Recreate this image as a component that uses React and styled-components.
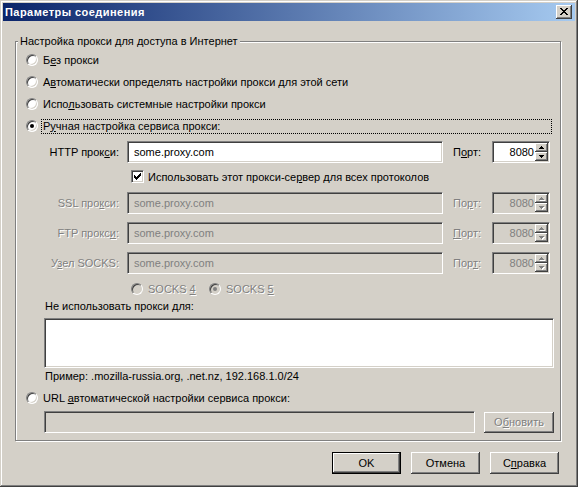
import React from 'react'
import styled, { createGlobalStyle } from 'styled-components'

const GlobalStyle = createGlobalStyle`
  html, body {
    margin: 0;
    padding: 0;
    background: #d4d0c8;
  }
  body {
    font-family: "Liberation Sans", Arial, sans-serif;
    font-size: 11px;
    color: #000;
  }
`

const raised = `inset -1px -1px 0 #404040, inset 1px 1px 0 #fff, inset -2px -2px 0 #808080, inset 2px 2px 0 #d4d0c8`
const sunken = `inset 1px 1px 0 #404040, inset -1px -1px 0 #d4d0c8`

const Window = styled.div`
  box-sizing: border-box;
  width: 578px;
  height: 487px;
  padding: 3px;
  background: #d4d0c8;
  box-shadow: inset -1px -1px 0 #404040, inset 1px 1px 0 #d4d0c8,
    inset -2px -2px 0 #808080, inset 2px 2px 0 #fff;
  display: flex;
  flex-direction: column;
`

const TitleBar = styled.div`
  flex: none;
  height: 18px;
  display: flex;
  align-items: center;
  justify-content: space-between;
  padding: 0 3px 0 2px;
  background: linear-gradient(to right, #0a246a, #a6caf0);
  color: #fff;
  font-weight: bold;
  font-size: 11px;
  letter-spacing: 0.45px;
`

const CloseButton = styled.div`
  box-sizing: border-box;
  width: 16px;
  height: 14px;
  background: #d4d0c8;
  box-shadow: ${raised};
  display: flex;
  align-items: center;
  justify-content: center;
  padding-bottom: 1px;
`

const Client = styled.div`
  flex: 1;
  display: flex;
  flex-direction: column;
  padding: 14px 14px 0 12px;
`

const Group = styled.fieldset`
  margin: 0;
  padding: 1px 0 7px;
  min-width: 0;
  border: 1px solid #808080;
  box-shadow: inset 1px 1px 0 #fff, 1px 1px 0 #fff;
`

const Legend = styled.legend`
  margin-left: 2px;
  padding: 0 2px;
  line-height: 13px;
  background: #d4d0c8;
`

const Key = styled.span`
  text-decoration: underline;
`

const OptionRow = styled.div`
  display: flex;
  align-items: center;
  height: ${p => p.$h || 22}px;
  margin-top: ${p => p.$mt || 0}px;
  padding-left: ${p => p.$indent}px;
  padding-right: 8px;
`

const Radio = styled.span`
  flex: none;
  box-sizing: border-box;
  width: 12px;
  height: 12px;
  border-radius: 50%;
  background: ${p => (p.$off ? '#d4d0c8' : '#fff')};
  border: 1px solid;
  border-color: #808080 #fff #fff #808080;
  box-shadow: ${sunken};
  display: flex;
  align-items: center;
  justify-content: center;

  &::after {
    content: '';
    display: ${p => (p.$on ? 'block' : 'none')};
    width: 4px;
    height: 4px;
    border-radius: 50%;
    background: ${p => (p.$off ? '#808080' : '#000')};
  }
`

const OptionText = styled.span`
  flex: ${p => (p.$focus ? 1 : 'none')};
  width: ${p => (p.$w ? `${p.$w}px` : 'auto')};
  margin-left: 3px;
  padding: 0 1px;
  line-height: 13px;
  border: 1px dotted ${p => (p.$focus ? '#000' : 'transparent')};
  color: ${p => (p.$off ? '#808080' : '#000')};
  text-shadow: ${p => (p.$off ? '1px 1px 0 #fff' : 'none')};
  white-space: nowrap;
`

const FieldRow = styled.div`
  display: flex;
  align-items: center;
  height: ${p => p.$h || 22}px;
  margin-top: ${p => p.$mt || 0}px;
  padding-left: ${p => p.$indent || 0}px;
`

const FieldLabel = styled.span`
  flex: none;
  width: ${p => (p.$w ? `${p.$w}px` : 'auto')};
  margin-left: ${p => p.$ml || 0}px;
  margin-right: ${p => p.$mr || 0}px;
  text-align: ${p => p.$align || 'left'};
  color: ${p => (p.$off ? '#808080' : '#000')};
  text-shadow: ${p => (p.$off ? '1px 1px 0 #fff' : 'none')};
  white-space: nowrap;
`

const Edit = styled.input`
  flex: none;
  box-sizing: border-box;
  width: ${p => p.$w}px;
  height: 22px;
  margin: 0;
  padding: 0 6px;
  font: inherit;
  background: ${p => (p.$off ? '#d4d0c8' : '#fff')};
  color: ${p => (p.$off ? '#808080' : '#000')};
  border: 1px solid;
  border-color: #808080 #fff #fff #808080;
  box-shadow: ${sunken};
  outline: none;
`

const Memo = styled.textarea`
  display: block;
  box-sizing: border-box;
  width: 510px;
  height: 50px;
  margin: 5px 0 0 28px;
  padding: 2px 4px;
  font: inherit;
  resize: none;
  background: #fff;
  border: 1px solid;
  border-color: #808080 #fff #fff #808080;
  box-shadow: ${sunken};
  outline: none;
`

const PortBox = styled.div`
  flex: none;
  box-sizing: border-box;
  width: 58px;
  height: 22px;
  padding: 1px;
  display: flex;
  background: ${p => (p.$off ? '#d4d0c8' : '#fff')};
  border: 1px solid;
  border-color: #808080 #fff #fff #808080;
  box-shadow: ${sunken};
`

const PortValue = styled.span`
  flex: 1;
  align-self: center;
  text-align: right;
  padding-right: 1px;
  color: ${p => (p.$off ? '#808080' : '#000')};
`

const Spin = styled.div`
  flex: none;
  width: 13px;
  display: flex;
  flex-direction: column;
`

const SpinButton = styled.div`
  flex: 1;
  background: #d4d0c8;
  box-shadow: ${raised};
  display: flex;
  align-items: center;
  justify-content: center;
`

const CheckBox = styled.span`
  flex: none;
  box-sizing: border-box;
  width: 13px;
  height: 13px;
  background: #fff;
  border: 1px solid;
  border-color: #808080 #fff #fff #808080;
  box-shadow: ${sunken};
  display: flex;
  align-items: center;
  justify-content: center;
`

const Note = styled.div`
  line-height: 13px;
  margin-top: ${p => p.$mt || 0}px;
  padding-left: 29px;
`

const PushButton = styled.button`
  box-sizing: border-box;
  width: ${p => p.$w || 69}px;
  height: ${p => p.$h || 22}px;
  margin: 0 0 0 ${p => p.$ml || 0}px;
  padding: 0;
  font: inherit;
  background: #d4d0c8;
  color: ${p => (p.$off ? '#808080' : '#000')};
  text-shadow: ${p => (p.$off ? '1px 1px 0 #fff' : 'none')};
  border: ${p => (p.$default ? '1px solid #000' : 'none')};
  box-shadow: ${raised};
  flex: none;
`

const ButtonBar = styled.div`
  display: flex;
  justify-content: flex-end;
  gap: 10px;
  margin-top: 11px;
  padding-right: 2px;
`

const upArrow = 'M2 0h1v1h-1z M1 1h3v1h-3z M0 2h5v1h-5z'
const downArrow = 'M0 0h5v1h-5z M1 1h3v1h-3z M2 2h1v1h-1z'

const Arrow = ({ up, off }) => (
  <svg width="5" height="3" viewBox="0 0 5 3" shapeRendering="crispEdges" style={{ overflow: 'visible' }}>
    {off && <path transform="translate(1 1)" fill="#fff" d={up ? upArrow : downArrow} />}
    <path fill={off ? '#808080' : '#000'} d={up ? upArrow : downArrow} />
  </svg>
)

const Port = ({ value, off }) => (
  <PortBox $off={off}>
    <PortValue $off={off}>{value}</PortValue>
    <Spin>
      <SpinButton><Arrow up off={off} /></SpinButton>
      <SpinButton><Arrow off={off} /></SpinButton>
    </Spin>
  </PortBox>
)

const ProxyRow = ({ label, portLabel, off, mt }) => (
  <FieldRow $mt={mt}>
    <FieldLabel $w={103} $mr={8} $align="right" $off={off}>{label}</FieldLabel>
    <Edit $w={316} $off={off} readOnly value="some.proxy.com" />
    <FieldLabel $w={39} $ml={10} $off={off}>{portLabel}</FieldLabel>
    <Port value="8080" off={off} />
  </FieldRow>
)

const App = () => (
  <>
    <GlobalStyle />
    <Window>
      <TitleBar>
        <span>Параметры соединения</span>
        <CloseButton>
          <svg width="8" height="7" viewBox="0 0 8 7" shapeRendering="crispEdges">
            <path
              fill="#000"
              d="M0 0h2v1h-2z M6 0h2v1h-2z M1 1h2v1h-2z M5 1h2v1h-2z M2 2h4v1h-4z M3 3h2v1h-2z M2 4h4v1h-4z M1 5h2v1h-2z M5 5h2v1h-2z M0 6h2v1h-2z M6 6h2v1h-2z"
            />
          </svg>
        </CloseButton>
      </TitleBar>

      <Client>
        <Group>
          <Legend>Настройка прокси для доступа в Интернет</Legend>

          <OptionRow $indent={10}>
            <Radio />
            <OptionText>Б<Key>е</Key>з прокси</OptionText>
          </OptionRow>
          <OptionRow $indent={10}>
            <Radio />
            <OptionText>А<Key>в</Key>томатически определять настройки прокси для этой сети</OptionText>
          </OptionRow>
          <OptionRow $indent={10}>
            <Radio />
            <OptionText>Испо<Key>л</Key>ьзовать системные настройки прокси</OptionText>
          </OptionRow>
          <OptionRow $indent={10}>
            <Radio $on />
            <OptionText $focus>Р<Key>у</Key>чная настройка сервиса прокси:</OptionText>
          </OptionRow>

          <ProxyRow mt={4} label={<>HTTP прок<Key>с</Key>и:</>} portLabel={<>П<Key>о</Key>рт:</>} />

          <FieldRow $mt={6} $h={15} $indent={115}>
            <CheckBox>
              <svg width="7" height="7" viewBox="0 0 7 7" shapeRendering="crispEdges">
                <path
                  fill="#000"
                  d="M0 2h1v3h-1z M1 3h1v3h-1z M2 4h1v3h-1z M3 3h1v3h-1z M4 2h1v3h-1z M5 1h1v3h-1z M6 0h1v3h-1z"
                />
              </svg>
            </CheckBox>
            <FieldLabel $ml={4}>Использовать этот прокси-се<Key>р</Key>вер для всех протоколов</FieldLabel>
          </FieldRow>

          <ProxyRow mt={8} off label={<>SSL про<Key>к</Key>си:</>} portLabel={<>По<Key>р</Key>т:</>} />
          <ProxyRow mt={8} off label={<>FTP прокс<Key>и</Key>:</>} portLabel={<><Key>П</Key>орт:</>} />
          <ProxyRow mt={8} off label={<>У<Key>з</Key>ел SOCKS:</>} portLabel={<>Пор<Key>т</Key>:</>} />

          <OptionRow $indent={115} $h={16} $mt={7}>
            <Radio $off />
            <OptionText $off $w={59}>SOCKS <Key>4</Key></OptionText>
            <Radio $off $on />
            <OptionText $off>SOCKS <Key>5</Key></OptionText>
          </OptionRow>

          <Note $mt={3}>Не использовать прокси для:</Note>
          <Memo readOnly value="" />
          <Note $mt={2}>Пример: .mozilla-russia.org, .net.nz, 192.168.1.0/24</Note>

          <OptionRow $indent={10} $h={16} $mt={7}>
            <Radio />
            <OptionText>URL <Key>а</Key>втоматической настройки сервиса прокси:</OptionText>
          </OptionRow>

          <FieldRow $mt={5} $indent={28}>
            <Edit $w={431} $off readOnly value="" />
            <PushButton $w={70} $h={21} $ml={9} $off>
              О<Key>б</Key>новить
            </PushButton>
          </FieldRow>
        </Group>

        <ButtonBar>
          <PushButton $default>OK</PushButton>
          <PushButton>Отмена</PushButton>
          <PushButton>С<Key>п</Key>равка</PushButton>
        </ButtonBar>
      </Client>
    </Window>
  </>
)

export default App
